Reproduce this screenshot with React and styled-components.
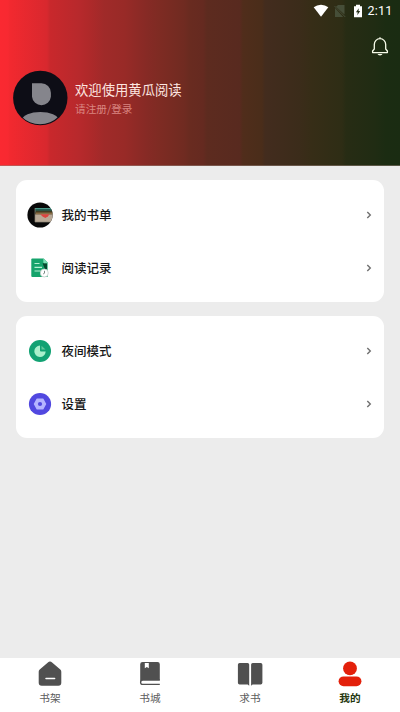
import React from 'react'
import styled, { createGlobalStyle } from 'styled-components'

const menuGroups = [
  [
    { label: '我的书单', icon: 'list' },
    { label: '阅读记录', icon: 'history' },
  ],
  [
    { label: '夜间模式', icon: 'night' },
    { label: '设置', icon: 'settings' },
  ],
]

const tabs = [
  { label: '书架', icon: 'shelf' },
  { label: '书城', icon: 'store' },
  { label: '求书', icon: 'request' },
  { label: '我的', icon: 'mine', active: true },
]

const menuIcons = {
  list: (
    <svg width="26" height="26" viewBox="0 0 26 26">
      <clipPath id="disc"><circle cx="13" cy="13" r="12.6" /></clipPath>
      <circle cx="13" cy="13" r="12.6" fill="#090909" />
      <g clipPath="url(#disc)">
        <rect x="8" y="6" width="18" height="4" fill="#245f55" />
        <rect x="8" y="6" width="18" height="1" fill="#4c9a8a" />
        <rect x="8.5" y="8.7" width="18" height="2" fill="#423d24" />
        <rect x="8.5" y="10.4" width="18" height="2.2" fill="#8a6d42" />
        <rect x="8" y="12.400" width="18" height="7.600" fill="#b9a997" />
        <path d="M13.200 12.200h9.300l-1.700 2.300-2.500 1.500-2.700-1.500z" fill="#dc4640" />
        <path d="M8 6v14h18" fill="none" stroke="#8b8576" strokeWidth=".7" />
      </g>
    </svg>
  ),
  history: (
    <svg width="26" height="26" viewBox="0 0 26 26">
      <path d="M5.300 3.600h11.300l4 3.900v14.500H5.300a1 1 0 0 1-1-1V4.600a1 1 0 0 1 1-1z" fill="#16a46c" />
      <path d="M15.600 8.300H20v6.300h-2z" fill="#07492f" />
      <path d="M16.300 3.600v3.700a1 1 0 0 0 1 1H20.600v-.8z" fill="#7ddfb5" />
      <path d="M7.500 8.500h5M7.500 12.300h7.500M7.500 16h6" stroke="#b6f0d3" strokeWidth="1.200" />
      <circle cx="17.300" cy="18" r="4" fill="#fff" stroke="#c1ccc8" strokeWidth=".7" />
      <path d="M17.500 15.800v2.400l-1.400.8" fill="none" stroke="#6d7d78" strokeWidth=".9" />
    </svg>
  ),
  night: (
    <svg width="26" height="26" viewBox="0 0 26 26">
      <circle cx="13" cy="13" r="11" fill="#12a273" />
      <path d="M13 7.600a5.700 5.700 0 1 0 5.700 6H14a1 1 0 0 1-1-1z" fill="#a9f0cc" />
      <path d="M14.500 7.800v3.800h4z" fill="#62c79c" />
    </svg>
  ),
  settings: (
    <svg width="26" height="26" viewBox="0 0 26 26">
      <circle cx="13" cy="13" r="11.100" fill="#5148e0" />
      <path d="M10.200 8.200h5.600l2.700 4.800-2.700 4.800h-5.600L7.500 13z" fill="#b5b4ff" stroke="#b5b4ff" strokeWidth="1.500" strokeLinejoin="round" />
      <circle cx="13" cy="13" r="2.100" fill="#5148e0" />
    </svg>
  ),
}

const tabIcons = {
  shelf: (
    <svg width="26" height="26" viewBox="0 0 26 26">
      <path d="M10.900 1.500a3 3 0 0 1 4.200 0l8.200 7a3 3 0 0 1 1 2.300v11a3 3 0 0 1-3 3H4.700a3 3 0 0 1-3-3v-11a3 3 0 0 1 1-2.300z" fill="#505050" />
      <path d="M9 17.600h8.600" stroke="#fff" strokeWidth="1.500" strokeLinecap="round" />
    </svg>
  ),
  store: (
    <svg width="26" height="26" viewBox="0 0 26 26">
      <path d="M5.500.9h15a2.300 2.300 0 0 1 2.300 2.300v16.600H3.200V3.200A2.300 2.300 0 0 1 5.500.9z" fill="#505050" />
      <path d="M22.800 19h-17a2.200 2.200 0 0 0 0 4.400h17" fill="#fff" stroke="#505050" strokeWidth="1.300" />
      <path d="M7.800 2h4v5.300l-2-1.400-2 1.400z" fill="#fff" />
    </svg>
  ),
  request: (
    <svg width="26" height="26" viewBox="0 0 26 26">
      <path d="M2.600 2h8a1.600 1.600 0 0 1 1.600 1.600v21.100l-1.500-1.300H2.600A1.700 1.700 0 0 1 .9 21.700v-18A1.700 1.700 0 0 1 2.600 2zM23.700 2h-8a1.600 1.600 0 0 0-1.600 1.600v21.100l1.500-1.300h8.100a1.700 1.700 0 0 0 1.700-1.700v-18A1.700 1.700 0 0 0 23.700 2z" fill="#505050" />
    </svg>
  ),
  mine: (
    <svg width="26" height="26" viewBox="0 0 26 26">
      <circle cx="13" cy="7.400" r="6.900" fill="#e3200b" />
      <rect x="1.600" y="15.400" width="22.800" height="9.800" rx="4.900" fill="#e3200b" />
    </svg>
  ),
}

const StatusIcons = () => (
  <>
    <svg width="16" height="14" viewBox="0 0 16 14">
      <path d="M.7 3.300a11.800 11.800 0 0 1 14.600 0L8 12.700z" fill="#fff" />
    </svg>
    <svg width="12" height="14" viewBox="0 0 12 14">
      <path d="M4 1h6.500v9.500L2 2.800zM1 4l8.200 9H1z" fill="#464e38" />
      <path d="M.5 2l10.800 11" stroke="#464e38" strokeWidth="1" />
    </svg>
    <svg width="10" height="14" viewBox="0 0 10 14">
      <path d="M3 .8h4v1.400h2v11.100H1V2.200h2z" fill="#fff" />
      <path d="M5.800 4.300L2.900 8.200h1.800l-.4 3L7.200 7H5.500z" fill="#26301a" />
    </svg>
  </>
)

const App = () => {
  return (
    <Page>
      <GlobalStyle />
      <Header>
        <StatusBar>
          <StatusIcons />
          <Clock>2:11</Clock>
        </StatusBar>
        <Toolbar>
          <svg width="18" height="21" viewBox="0 0 18 21">
            <path d="M9 1.300v1.300M1.600 16.600V15l1.700-2V8.400a5.700 5.700 0 0 1 11.400 0V13l1.700 2v1.600z" fill="none" stroke="#f7fbe9" strokeWidth="1.300" strokeLinejoin="round" />
            <path d="M6.500 18h5a2.600 2 0 0 1-5 0z" fill="#f7fbe9" />
          </svg>
        </Toolbar>
        <Profile>
          <svg width="56" height="56" viewBox="0 0 56 56">
            <clipPath id="avatar"><circle cx="28" cy="28" r="26.300" /></clipPath>
            <circle cx="28.300" cy="28" r="27.200" fill="#0d0d16" />
            <path d="M20 13.200h9.300a9.500 9.500 0 0 1 9.600 9.500v4a9.500 9.500 0 0 1-18.900 0z" fill="#85858c" />
            <ellipse cx="28.300" cy="49.500" rx="18" ry="7.500" fill="#85858c" clipPath="url(#avatar)" />
          </svg>
          <Greeting>
            <Welcome>欢迎使用黄瓜阅读</Welcome>
            <LoginHint>请注册/登录</LoginHint>
          </Greeting>
        </Profile>
      </Header>

      <Content>
        {menuGroups.map((group, i) => (
          <Card key={i}>
            {group.map((item) => (
              <Row key={item.label}>
                {menuIcons[item.icon]}
                <RowLabel>{item.label}</RowLabel>
                <svg width="6" height="8" viewBox="0 0 6 8">
                  <path d="M1.300 1l3 3-3 3" fill="none" stroke="#707070" strokeWidth="1.400" />
                </svg>
              </Row>
            ))}
          </Card>
        ))}
      </Content>

      <TabBar>
        {tabs.map((tab) => (
          <Tab key={tab.label} $active={tab.active}>
            {tabIcons[tab.icon]}
            <span>{tab.label}</span>
          </Tab>
        ))}
      </TabBar>
    </Page>
  )
}

const GlobalStyle = createGlobalStyle`
* {
  box-sizing: border-box;
}

body {
  margin: 0;
  font-family: 'Noto Sans CJK SC', sans-serif;
}

svg {
  display: block;
  flex-shrink: 0;
}
`

const Page = styled.div`
display: flex;
flex-direction: column;
width: 400px;
height: 712px;
overflow: hidden;
background: #ececec;
`

const Header = styled.header`
height: 166px;
flex-shrink: 0;
border-bottom: 1px solid rgba(150, 130, 120, 0.5);
background: linear-gradient(
  90deg,
  #fa2931 0, #f82931 8px,
  #f2292f 10px, #d8282e 47px,
  #c9282c 50px, #b8292c 78px,
  #b0292a 88px, #a02a29 104px,
  #982a27 125px, #862a25 147px,
  #7e2b23 160px, #702b21 184px,
  #692b20 190px, #652a20 203px,
  #5d2b1f 207px, #582a1f 240px,
  #502d1b 243px, #4a2d1a 262px,
  #432c1e 265px, #3b2c1a 300px,
  #372d17 310px, #2e2d15 342px,
  #272c14 346px, #202c13 375px,
  #1b2c12 386px, #1a2c12 400px
);
`

const StatusBar = styled.div`
display: flex;
align-items: center;
justify-content: flex-end;
height: 22px;
padding-right: 7.500px;

svg + svg {
  margin-left: 5.500px;
}

svg:nth-child(3) {
  margin-left: 6.500px;
}
`

const Clock = styled.span`
margin-left: 5px;
font-family: Roboto, sans-serif;
font-size: 12.500px;
font-weight: 400;
line-height: 22px;
letter-spacing: 0.2px;
color: #fff;
`

const Toolbar = styled.div`
display: flex;
justify-content: flex-end;
height: 48px;
padding: 14px 11px 0 0;
`

const Profile = styled.div`
display: flex;
align-items: center;
height: 56px;
padding-left: 12px;
`

const Greeting = styled.div`
margin: 1px 0 0 7px;
`

const Welcome = styled.p`
margin: 0;
font-size: 13.330px;
line-height: 19px;
color: #fde6e0;
`

const LoginHint = styled.p`
margin: 0;
padding-top: 1px;
font-size: 10.670px;
line-height: 17px;
color: #d98580;
`

const Content = styled.main`
display: flex;
flex: 1;
flex-direction: column;
gap: 14px;
padding: 14px 16px;
`

const Card = styled.section`
height: 122px;
padding: 8px 12px 7px 11px;
border-radius: 11px;
background: #fff;
`

const Row = styled.div`
display: flex;
align-items: center;
height: 53.500px;
`

const RowLabel = styled.span`
flex: 1;
margin-left: 8.500px;
font-size: 12.500px;
font-weight: 500;
line-height: 18px;
color: #161616;
`

const TabBar = styled.nav`
display: grid;
grid-template-columns: repeat(4, 1fr);
height: 54px;
flex-shrink: 0;
background: #fff;
`

const Tab = styled.div`
display: flex;
flex-direction: column;
align-items: center;
padding-top: 3px;
font-size: 10.670px;
font-weight: ${props => props.$active ? 700 : 400};
line-height: 16px;
color: ${props => props.$active ? '#26380f' : '#5c5c5c'};

span {
  margin-top: 3px;
}
`

export default App
